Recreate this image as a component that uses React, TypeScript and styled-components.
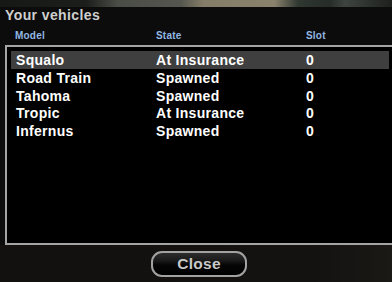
import React from "react";
import styled, { createGlobalStyle } from "styled-components";

const GlobalStyle = createGlobalStyle`
  html, body {
    margin: 0;
    padding: 0;
    background: #0b0b0b;
  }
  * {
    box-sizing: border-box;
  }
`;

type Vehicle = {
  model: string;
  state: string;
  slot: number;
};

const vehicles: Vehicle[] = [
  { model: "Squalo", state: "At Insurance", slot: 0 },
  { model: "Road Train", state: "Spawned", slot: 0 },
  { model: "Tahoma", state: "Spawned", slot: 0 },
  { model: "Tropic", state: "At Insurance", slot: 0 },
  { model: "Infernus", state: "Spawned", slot: 0 },
];

export default function App() {
  const selected = 0;

  return (
    <>
      <GlobalStyle />
      <Screen>
        <SceneStrip />
        <Dialog>
          <Title>Your vehicles</Title>
          <HeaderRow>
            <HeaderCell>Model</HeaderCell>
            <HeaderCell>State</HeaderCell>
            <HeaderCell>Slot</HeaderCell>
          </HeaderRow>
          <ListBox>
            {vehicles.map((v, i) => (
              <ListRow key={v.model} $selected={i === selected}>
                <Cell>{v.model}</Cell>
                <Cell>{v.state}</Cell>
                <Cell>{v.slot}</Cell>
              </ListRow>
            ))}
          </ListBox>
          <Footer>
            <CloseButton>Close</CloseButton>
          </Footer>
        </Dialog>
      </Screen>
    </>
  );
}

const Screen = styled.div`
  width: 392px;
  height: 282px;
  overflow: hidden;
  display: flex;
  flex-direction: column;
  background: #0c0c0c;
  font-family: "Liberation Sans", Arial, sans-serif;
  font-weight: bold;
`;

// bit of the game world peeking above the dialog
const SceneStrip = styled.div`
  height: 7px;
  flex-shrink: 0;
  background: linear-gradient(
    to right,
    #161816 0%,
    #1c1e1b 22%,
    #4a4c46 30%,
    #55564f 46%,
    #857d68 52%,
    #8a826d 70%,
    #303832 76%,
    #262c28 84%,
    #3e443f 88%,
    #1d201d 100%
  );
`;

const Dialog = styled.div`
  flex: 1;
  display: flex;
  flex-direction: column;
  background: #0c0c0c;
`;

const Title = styled.div`
  padding-left: 5px;
  font-size: 14px;
  line-height: 16px;
  color: #cfcfcf;
  letter-spacing: 0.4px;
`;

const HeaderRow = styled.div`
  margin-top: 7px;
  padding-left: 15px;
  display: grid;
  grid-template-columns: 141px 150px auto;
`;

const HeaderCell = styled.div`
  font-size: 10px;
  line-height: 12px;
  color: #93b7e3;
  letter-spacing: 0.2px;
`;

// the list runs to the right edge of the dialog, no right border
const ListBox = styled.div`
  margin-top: 3px;
  margin-left: 5px;
  height: 200px;
  padding: 4px 0 0 4px;
  background: #000;
  border-top: 2px solid #a4a4a4;
  border-left: 2px solid #a4a4a4;
  border-bottom: 2px solid #a4a4a4;
  border-right: none;
`;

const ListRow = styled.div<{ $selected?: boolean }>`
  display: grid;
  grid-template-columns: 140px 150px auto;
  height: 17.8px;
  margin-right: 3px;
  padding-left: 5px;
  background: ${(p) => (p.$selected ? "#3f3f3f" : "transparent")};
`;

const Cell = styled.div`
  font-size: 14px;
  line-height: 18px;
  color: #ffffff;
  letter-spacing: 0.3px;
  white-space: nowrap;
`;

const Footer = styled.div`
  flex: 1;
  display: flex;
  justify-content: center;
  align-items: flex-start;
  padding-top: 6px;
  padding-left: 6px;
  background: linear-gradient(to right, #131110 0%, #141210 80%, #1b1916 100%);
`;

const CloseButton = styled.button`
  width: 96px;
  height: 26px;
  padding: 0;
  border: 2px solid #a2a2a2;
  border-radius: 11px;
  background: linear-gradient(
    to bottom,
    #2c2c2c 0%,
    #1a1a1a 35%,
    #050505 55%,
    #000 100%
  );
  color: #c9c9c9;
  font-family: "Liberation Sans", Arial, sans-serif;
  font-weight: bold;
  font-size: 15.5px;
  line-height: 22px;
  letter-spacing: 0.3px;
`;
